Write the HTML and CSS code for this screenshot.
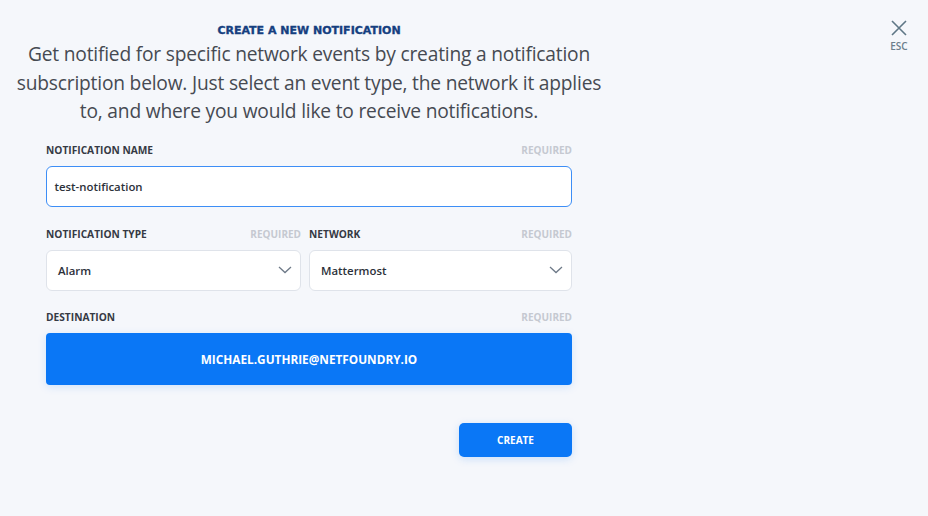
FILE: index.html
```html
<!DOCTYPE html>
<html>
<head>
<meta charset="utf-8">
<link rel="stylesheet" href="styles.css">
</head>
<body>
<div class="page">
  <div class="panel">
    <h1 class="title">CREATE A NEW NOTIFICATION</h1>
    <p class="intro">Get notified for specific network events by creating a notification subscription below. Just select an event type, the network it applies to, and where you would like to receive notifications.</p>
    <form class="form">
      <div class="field">
        <div class="label-row"><span class="label">NOTIFICATION NAME</span><span class="req">REQUIRED</span></div>
        <div class="input focused">test-notification</div>
      </div>
      <div class="row">
        <div class="field">
          <div class="label-row"><span class="label">NOTIFICATION TYPE</span><span class="req">REQUIRED</span></div>
          <div class="input select"><span>Alarm</span>
            <svg class="chev" width="14" height="8" viewBox="0 0 14 8"><path d="M1 1l6 5.5L13 1" fill="none" stroke="#6e7a88" stroke-width="1.3"/></svg>
          </div>
        </div>
        <div class="field">
          <div class="label-row"><span class="label">NETWORK</span><span class="req">REQUIRED</span></div>
          <div class="input select"><span>Mattermost</span>
            <svg class="chev" width="14" height="8" viewBox="0 0 14 8"><path d="M1 1l6 5.5L13 1" fill="none" stroke="#6e7a88" stroke-width="1.3"/></svg>
          </div>
        </div>
      </div>
      <div class="field dest-field">
        <div class="label-row"><span class="label">DESTINATION</span><span class="req">REQUIRED</span></div>
        <div class="dest">MICHAEL.GUTHRIE@NETFOUNDRY.IO</div>
      </div>
      <div class="actions"><button type="button" class="create">CREATE</button></div>
    </form>
  </div>
  <div class="close">
    <svg width="18" height="18" viewBox="0 0 18 18"><path d="M2 2L16 16M16 2L2 16" stroke="#5f7786" stroke-width="1.6" fill="none"/></svg>
    <span class="esc">ESC</span>
  </div>
</div>
</body>
</html>
```

FILE: styles.css
```css
* { box-sizing: border-box; }
html, body { margin: 0; padding: 0; }
body {
  background: #f5f7fb;
  font-family: "Open Sans", "Liberation Sans", sans-serif;
  width: 928px;
  height: 516px;
  overflow: hidden;
}
.page {
  display: flex;
  justify-content: space-between;
  width: 928px;
}
.panel {
  width: 618px;
  padding-top: 24px;
  display: flex;
  flex-direction: column;
  align-items: center;
}
.title {
  margin: 0;
  font-family: "DejaVu Sans", sans-serif;
  font-weight: 700;
  font-size: 11px;
  letter-spacing: 0;
  color: #163f80;
  line-height: 14px;
  -webkit-text-stroke: 0.35px #163f80;
}
.intro {
  margin: 2px 0 0 0;
  width: 592px;
  text-align: center;
  font-size: 19.2px;
  line-height: 28.5px;
  color: #464a52;
  letter-spacing: -0.2px;
}
.form {
  width: 526px;
  margin-top: 16px;
  display: flex;
  flex-direction: column;
}
.field { display: flex; flex-direction: column; min-width: 0; }
.label-row {
  display: flex;
  justify-content: space-between;
  align-items: center;
  height: 16px;
  margin-bottom: 8px;
}
.label {
  font-size: 10.2px;
  font-weight: 700;
  color: #353a44;
}
.req {
  font-size: 10px;
  font-weight: 700;
  color: #c5c9d1;
}
.input {
  height: 41px;
  background: #fff;
  border: 1px solid #dfe3ea;
  border-radius: 6px;
  padding: 0 9px;
  display: flex;
  align-items: center;
  font-size: 11.4px;
  font-weight: 600;
  color: #2c313a;
}
.input.focused {
  border: 1.5px solid #3d8ef6;
  padding-left: 7.5px;
}
.row {
  display: grid;
  grid-template-columns: 255px 1fr;
  gap: 8px;
  margin-top: 19px;
}
.select {
  justify-content: space-between;
  padding: 0 8px 0 11px;
}
.dest-field { margin-top: 18px; }
.dest {
  height: 52px;
  background: #0a77f6;
  border-radius: 4px;
  color: #fff;
  font-size: 11.8px;
  font-weight: 700;
  display: flex;
  align-items: center;
  justify-content: center;
  box-shadow: 0 2px 8px rgba(10, 119, 246, 0.15);
}
.actions {
  display: flex;
  justify-content: flex-end;
  margin-top: 38px;
}
.create {
  width: 113px;
  height: 34px;
  border: none;
  border-radius: 5px;
  background: #0a77f6;
  color: #fff;
  font-family: "Open Sans", sans-serif;
  font-size: 10px;
  font-weight: 700;
  box-shadow: 0 2px 8px rgba(10, 119, 246, 0.18);
}
.close {
  display: flex;
  flex-direction: column;
  align-items: center;
  padding-top: 19px;
  margin-right: 20px;
  gap: 2px;
}
.esc {
  font-size: 10px;
  font-weight: 600;
  color: #6b7e8c;
}
```
